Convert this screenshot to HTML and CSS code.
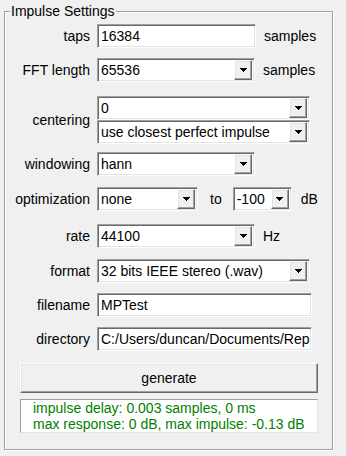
FILE: index.html
```html
<!DOCTYPE html>
<html>
<head>
<meta charset="utf-8">
<title>Impulse Settings</title>
<link rel="stylesheet" href="styles.css">
</head>
<body>
<div class="group">
  <div class="group-title">Impulse Settings</div>

  <div class="row row-taps">
    <span class="label">taps</span>
    <div class="entry w-entry">16384</div>
    <span class="unit">samples</span>
  </div>

  <div class="row row-fft">
    <span class="label">FFT length</span>
    <div class="combo w-mid"><span class="combo-text">65536</span><span class="arrow"><svg width="7" height="4" viewBox="0 0 7 4"><path d="M0 0h7v1h-1v1h-1v1h-1v1h-1v-1h-1v-1h-1v-1h-1z" fill="#000"/></svg></span></div>
    <span class="unit">samples</span>
  </div>

  <div class="row row-center">
    <span class="label">centering</span>
    <div class="stack">
      <div class="combo w-wide"><span class="combo-text">0</span><span class="arrow"><svg width="7" height="4" viewBox="0 0 7 4"><path d="M0 0h7v1h-1v1h-1v1h-1v1h-1v-1h-1v-1h-1v-1h-1z" fill="#000"/></svg></span></div>
      <div class="combo w-wide"><span class="combo-text">use closest perfect impulse</span><span class="arrow"><svg width="7" height="4" viewBox="0 0 7 4"><path d="M0 0h7v1h-1v1h-1v1h-1v1h-1v-1h-1v-1h-1v-1h-1z" fill="#000"/></svg></span></div>
    </div>
  </div>

  <div class="row row-window">
    <span class="label">windowing</span>
    <div class="combo w-mid"><span class="combo-text">hann</span><span class="arrow"><svg width="7" height="4" viewBox="0 0 7 4"><path d="M0 0h7v1h-1v1h-1v1h-1v1h-1v-1h-1v-1h-1v-1h-1z" fill="#000"/></svg></span></div>
  </div>

  <div class="row row-opt">
    <span class="label">optimization</span>
    <div class="combo w-opt"><span class="combo-text">none</span><span class="arrow"><svg width="7" height="4" viewBox="0 0 7 4"><path d="M0 0h7v1h-1v1h-1v1h-1v1h-1v-1h-1v-1h-1v-1h-1z" fill="#000"/></svg></span></div>
    <span class="sep">to</span>
    <div class="combo w-db"><span class="combo-text">-100</span><span class="arrow"><svg width="7" height="4" viewBox="0 0 7 4"><path d="M0 0h7v1h-1v1h-1v1h-1v1h-1v-1h-1v-1h-1v-1h-1z" fill="#000"/></svg></span></div>
    <span class="unit unit-db">dB</span>
  </div>

  <div class="row row-rate">
    <span class="label">rate</span>
    <div class="combo w-mid"><span class="combo-text">44100</span><span class="arrow"><svg width="7" height="4" viewBox="0 0 7 4"><path d="M0 0h7v1h-1v1h-1v1h-1v1h-1v-1h-1v-1h-1v-1h-1z" fill="#000"/></svg></span></div>
    <span class="unit">Hz</span>
  </div>

  <div class="row row-format">
    <span class="label">format</span>
    <div class="combo w-wide"><span class="combo-text">32 bits IEEE stereo (.wav)</span><span class="arrow"><svg width="7" height="4" viewBox="0 0 7 4"><path d="M0 0h7v1h-1v1h-1v1h-1v1h-1v-1h-1v-1h-1v-1h-1z" fill="#000"/></svg></span></div>
  </div>

  <div class="row row-file">
    <span class="label">filename</span>
    <div class="entry w-path">MPTest</div>
  </div>

  <div class="row row-dir">
    <span class="label">directory</span>
    <div class="entry w-path">C:/Users/duncan/Documents/Rep</div>
  </div>

  <div class="button">generate</div>

  <div class="status">impulse delay: 0.003 samples, 0 ms<br>max response: 0 dB, max impulse: -0.13 dB</div>
</div>
</body>
</html>
```

FILE: styles.css
```css
* { box-sizing: border-box; }
html, body { margin: 0; padding: 0; }
body {
  width: 346px;
  height: 456px;
  overflow: hidden;
  background: #f0f0f0;
  font-family: "Liberation Sans", Arial, sans-serif;
  font-size: 14px;
  color: #000;
}

.group {
  position: relative;
  width: 329px;
  margin: 11px 0 0 4px;
  padding: 12px 0 16px 0;
  border: 1px solid #a0a0a0;
  box-shadow: 1px 1px 0 #fff, inset 1px 1px 0 #fff;
}
.group-title {
  position: absolute;
  top: -10px;
  left: 5px;
  padding: 0 1px;
  line-height: 18px;
  background: #f0f0f0;
}

.row {
  display: flex;
  align-items: center;
  margin-top: 10px;
}
.row-taps { margin-top: 0; }
.row-center { margin-top: 14px; }
.row-window { margin-top: 8px; }
.row-opt { margin-top: 11px; }
.row-rate { margin-top: 13px; }
.row-format { margin-top: 11px; }

.label {
  flex: none;
  width: 85px;
  margin-right: 7px;
  text-align: right;
  white-space: nowrap;
}
.unit { margin-left: 8px; white-space: nowrap; }
.unit-db { margin-left: 9px; }
.sep { margin: 0 11px 0 12px; }

.entry {
  height: 24px;
  padding: 1px 1px 1px 3px;
  border: 1px solid;
  border-color: #a0a0a0 #fff #fff #a0a0a0;
  box-shadow: inset 1px 1px 0 #696969, inset -1px -1px 0 #e3e3e3;
  background: #fff;
  line-height: 20px;
  white-space: nowrap;
  overflow: hidden;
}

.combo {
  display: flex;
  height: 24px;
  padding: 1px;
  border: 1px solid;
  border-color: #a0a0a0 #fff #fff #a0a0a0;
  box-shadow: inset 1px 1px 0 #696969, inset -1px -1px 0 #e3e3e3;
  background: #fff;
}
.combo-text {
  flex: 1;
  min-width: 0;
  padding-left: 2px;
  line-height: 20px;
  white-space: nowrap;
  overflow: hidden;
}
.arrow {
  flex: none;
  width: 18px;
  margin-right: 1px;
  display: flex;
  align-items: center;
  justify-content: center;
  background: #f0f0f0;
  border: 1px solid;
  border-color: #fff #696969 #696969 #fff;
  box-shadow: inset -1px -1px 0 #a0a0a0, inset 1px 1px 0 #e3e3e3;
}
.arrow svg { display: block; }

.stack { display: flex; flex-direction: column; }

.w-entry { width: 159px; }
.w-mid { width: 158px; }
.w-wide { width: 213px; }
.w-path { width: 215px; }
.w-opt { width: 101px; }
.w-db { width: 59px; }

.button {
  width: 298px;
  height: 30px;
  margin: 12px 0 0 15px;
  border: 1px solid;
  border-color: #fff #696969 #696969 #fff;
  box-shadow: inset -1px -1px 0 #a0a0a0, inset 1px 1px 0 #e3e3e3;
  background: #f0f0f0;
  text-align: center;
  line-height: 28px;
}

.status {
  width: 298px;
  height: 34px;
  margin: 6px 0 0 15px;
  padding-left: 12px;
  border: 1px solid;
  border-color: #a0a0a0 #e3e3e3 #e3e3e3 #a0a0a0;
  background: #fff;
  color: #008000;
  line-height: 16px;
  white-space: nowrap;
}
```
